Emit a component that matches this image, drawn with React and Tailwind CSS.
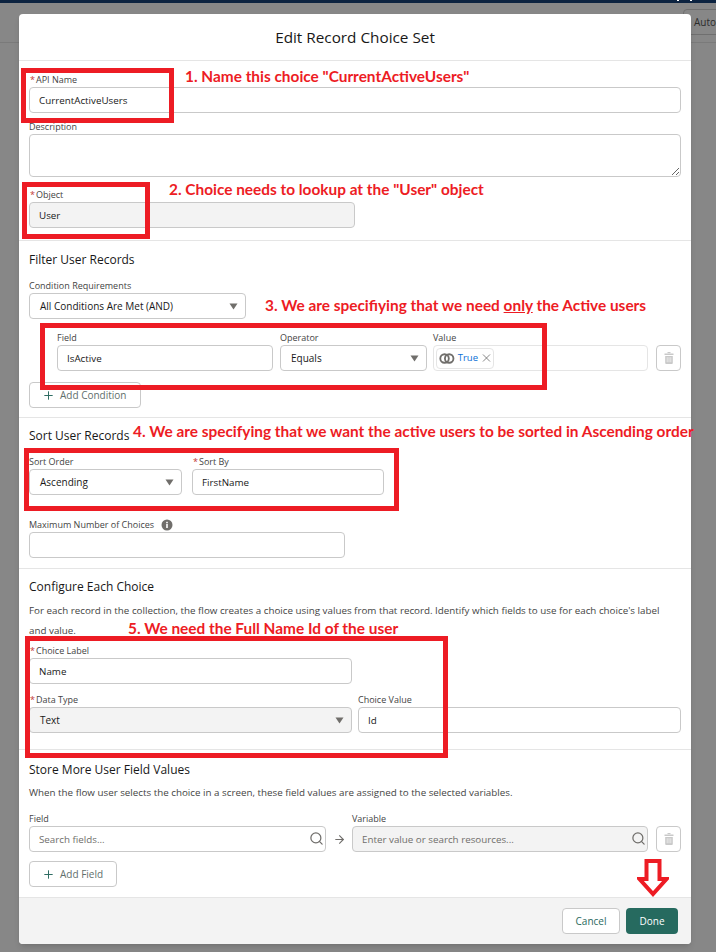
import React from 'react';
import { ArrowRight, Plus, Search, X } from 'lucide-react';

const Label = ({ children, required, className = '' }) => (
  <div className={`h-[14px] leading-[14px] text-[9px] text-[#444] whitespace-nowrap ${className}`}>
    {required && <span className="ml-[1px] mr-[1px] text-[#c23934]">*</span>}
    {children}
  </div>
);

const Input = ({ value = '', placeholder, className = '', disabled }) => (
  <input
    readOnly
    value={value}
    placeholder={placeholder}
    className={`block h-[26px] w-full rounded-[4px] border border-[#c9c9c9] px-[9px] text-[9.8px] text-[#181818] outline-none placeholder:text-[#706e6b] ${disabled ? 'bg-[#f3f3f3]' : 'bg-white'} ${className}`}
  />
);

const Select = ({ value, disabled, className = '' }) => (
  <div className={`flex h-[26px] items-center justify-between rounded-[4px] border border-[#c9c9c9] pl-[10px] pr-[7px] text-[10px] text-[#181818] ${disabled ? 'bg-[#f3f3f3]' : 'bg-white'} ${className}`}>
    <span>{value}</span>
    <svg width="9" height="7" viewBox="0 0 9 7"><path d="M0.5 0.5h8L4.5 6.5z" fill="#706e6b" /></svg>
  </div>
);

const Heading = ({ children, className = '' }) => (
  <div className={`h-[20px] leading-[22px] text-[12px] text-[#181818] whitespace-nowrap ${className}`}>{children}</div>
);

const TrashButton = () => (
  <div className="flex h-[26px] w-[25px] shrink-0 items-center justify-center rounded-[4px] border border-[#c9c9c9] bg-white">
    <svg width="10" height="12" viewBox="0 0 10 12" fill="#c9c9c9">
      <rect x="3.5" y="0" width="3" height="1.2" />
      <rect x="0.5" y="1.5" width="9" height="1.5" />
      <path d="M1.2 4h7.6v7a1 1 0 0 1-1 1H2.2a1 1 0 0 1-1-1z" />
      <path d="M3.2 5.2v5M5 5.2v5M6.8 5.2v5" stroke="#fff" strokeWidth="0.6" />
    </svg>
  </div>
);

const AddButton = ({ label, className = '' }) => (
  <div className={`flex h-[26px] items-center rounded-[4px] border border-[#c9c9c9] bg-white pl-[12px] text-[10px] text-[#5f6f6c] ${className}`}>
    <Plus size={13} strokeWidth={1.8} className="mr-[5px] text-[#2a6a60]" />
    {label}
  </div>
);

const RedBox = ({ className }) => (
  <div className={`absolute border-[5px] border-[#ed1c24] ${className}`} />
);

const Note = ({ children, className }) => (
  <div className={`absolute whitespace-nowrap font-['Lato',sans-serif] text-[15.4px] font-bold leading-[18px] text-[#ed1c24] ${className}`}>
    {children}
  </div>
);

export default function App() {
  return (
    <div className="relative h-[952px] w-[716px] overflow-hidden bg-[#878787] font-['Open_Sans',sans-serif]">
      {/* app behind the modal */}
      <div className="h-[3px] bg-[#0c2340]" />
      <div className="absolute left-0 right-0 top-[42px] h-px bg-[#7a7a7a]" />
      <div className="absolute left-[683px] top-[9px] h-[26px] w-[60px] rounded-[4px] border border-[#6f6f6f] pl-[10px] text-[10px] leading-[24px] text-[#2c2c2c]">Auto</div>
      <div className="absolute left-[677px] top-0 h-[1px] w-[2px] bg-white" />
      <div className="absolute left-[690px] top-0 h-[1px] w-[2px] bg-white" />

      {/* modal */}
      <div className="relative ml-[19px] mt-[11px] h-[930px] w-[672px] overflow-hidden rounded-[4px] bg-white shadow-md">
        <div className="flex h-[47px] items-center justify-center border-b border-[#e5e5e5] pt-[1px] text-[15.3px] text-[#181818]">
          Edit Record Choice Set
        </div>

        <div className="border-b-[1px] border-[#e5e5e5] px-[10px] pb-[12px] pt-[12px]">
          <Label required>API Name</Label>
          <Input value="CurrentActiveUsers" />
          <Label className="mt-[7px]">Description</Label>
          <textarea readOnly className="block h-[43px] w-full rounded-[4px] border border-[#c9c9c9] bg-white outline-none" />
          <Label required className="mt-[11px]">Object</Label>
          <Input value="User" disabled className="!w-[326px]" />
        </div>

        <div className="border-b border-[#e5e5e5] px-[10px] pb-[9px] pt-[8px]">
          <Heading>Filter User Records</Heading>
          <Label className="mt-[10px]">Condition Requirements</Label>
          <Select value="All Conditions Are Met (AND)" className="w-[217px]" />
          <div className="mt-[12px] flex items-end pl-[28px]">
            <div className="w-[216px]">
              <Label>Field</Label>
              <Input value="IsActive" />
            </div>
            <div className="ml-[7px] w-[147px]">
              <Label>Operator</Label>
              <Select value="Equals" />
            </div>
            <div className="ml-[6px] w-[215px]">
              <Label>Value</Label>
              <div className="flex h-[26px] items-center rounded-[4px] border border-[#e5e5e5] bg-white pl-[2px]">
                <div className="flex h-[21px] w-[58px] items-center rounded-[4px] border border-[#e5e5e5] pl-[2px] text-[9.5px] text-[#0b6fd6]">
                  <svg width="17" height="13" viewBox="0 0 17 13" fill="none" stroke="#706e6b" strokeWidth="2">
                    <circle cx="6" cy="6.5" r="4.6" />
                    <circle cx="11" cy="6.5" r="4.6" />
                  </svg>
                  <span className="ml-[3px]">True</span>
                  <X size={14} strokeWidth={1.3} className="ml-[2px] text-[#555]" />
                </div>
              </div>
            </div>
            <div className="ml-[8px]"><TrashButton /></div>
          </div>
          <AddButton label="Add Condition" className="mt-[11px] w-[112px]" />
        </div>

        <div className="border-b border-[#e5e5e5] px-[10px] pb-[10px] pt-[7px]">
          <Heading>Sort User Records</Heading>
          <div className="mt-[10px] flex">
            <div className="w-[153px]">
              <Label>Sort Order</Label>
              <Select value="Ascending" />
            </div>
            <div className="ml-[10px] w-[192px]">
              <Label required>Sort By</Label>
              <Input value="FirstName" />
            </div>
          </div>
          <div className="mt-[23px] flex h-[14px] items-center">
            <Label>Maximum Number of Choices</Label>
            <svg className="ml-[7px]" width="12" height="12" viewBox="0 0 12 12">
              <circle cx="6" cy="6" r="5.5" fill="#706e6b" />
              <rect x="5.2" y="5" width="1.6" height="4" fill="#fff" />
              <rect x="5.2" y="2.8" width="1.6" height="1.5" fill="#fff" />
            </svg>
          </div>
          <Input className="!w-[316px]" />
        </div>

        <div className="border-b border-[#e5e5e5] px-[10px] pb-[16px] pt-[7px]">
          <Heading>Configure Each Choice</Heading>
          <p className="mt-[5px] w-[640px] text-[9.8px] leading-[20px] text-[#444]">
            For each record in the collection, the flow creates a choice using values from that record. Identify which fields to use for each choice's label and value.
          </p>
          <Label required className="mt-[3px]">Choice Label</Label>
          <Input value="Name" className="!w-[323px]" />
          <div className="mt-[9px] grid grid-cols-2 gap-x-[6px]">
            <div>
              <Label required>Data Type</Label>
              <Select value="Text" disabled />
            </div>
            <div>
              <Label>Choice Value</Label>
              <Input value="Id" />
            </div>
          </div>
        </div>

        <div className="px-[10px] pb-[10px] pt-[9px]">
          <Heading>Store More User Field Values</Heading>
          <p className="mt-[4px] h-[20px] text-[9.8px] leading-[20px] text-[#444]">
            When the flow user selects the choice in a screen, these field values are assigned to the selected variables.
          </p>
          <div className="mt-[9px] flex items-end">
            <div className="w-[297px]">
              <Label>Field</Label>
              <div className="relative">
                <Input placeholder="Search fields..." />
                <Search size={15} className="absolute right-[2px] top-[5px] text-[#706e6b]" />
              </div>
            </div>
            <div className="flex h-[26px] w-[26px] items-center justify-center">
              <ArrowRight size={13} className="text-[#706e6b]" />
            </div>
            <div className="w-[296px]">
              <Label>Variable</Label>
              <div className="relative">
                <Input placeholder="Enter value or search resources..." disabled />
                <Search size={15} className="absolute right-[2px] top-[5px] text-[#706e6b]" />
              </div>
            </div>
            <div className="ml-[8px]"><TrashButton /></div>
          </div>
          <AddButton label="Add Field" className="mt-[9px] w-[88px]" />
        </div>

        <div className="flex h-[47px] items-center justify-end border-t border-[#e5e5e5] bg-[#f3f3f3] pr-[13px]">
          <div className="flex h-[26px] w-[58px] items-center justify-center rounded-[4px] border border-[#c9c9c9] bg-white text-[10px] text-[#2a6a60]">Cancel</div>
          <div className="ml-[6px] flex h-[26px] w-[52px] items-center justify-center rounded-[4px] bg-[#266a5f] text-[10px] text-white">Done</div>
        </div>
      </div>

      {/* red annotations drawn over the screenshot */}
      <RedBox className="left-[21px] top-[68px] h-[55px] w-[153px]" />
      <RedBox className="left-[22px] top-[182px] h-[57px] w-[128px]" />
      <RedBox className="left-[40px] top-[323px] h-[67px] w-[507px]" />
      <RedBox className="left-[24px] top-[448px] h-[63px] w-[375px]" />
      <RedBox className="left-[25px] top-[636px] h-[122px] w-[423px]" />

      <Note className="left-[185px] top-[67px]">1. Name this choice "CurrentActiveUsers"</Note>
      <Note className="left-[169px] top-[180px]">2. Choice needs to lookup at the "User" object</Note>
      <Note className="left-[265px] top-[296px]">3. We are specifiying that we need <span className="underline">only</span> the Active users</Note>
      <Note className="left-[133px] top-[422px]">4. We are specifying that we want the active users to be sorted in Ascending order</Note>
      <Note className="left-[128px] top-[619px]">5. We need the Full Name Id of the user</Note>

      <svg className="absolute left-[637px] top-[857px]" width="32" height="42" viewBox="0 0 32 42">
        <path d="M9.500 4h13v18h7L16 37 2.500 22h7z" fill="#fff" stroke="#ed1c24" strokeWidth="4" />
      </svg>
    </div>
  );
}
